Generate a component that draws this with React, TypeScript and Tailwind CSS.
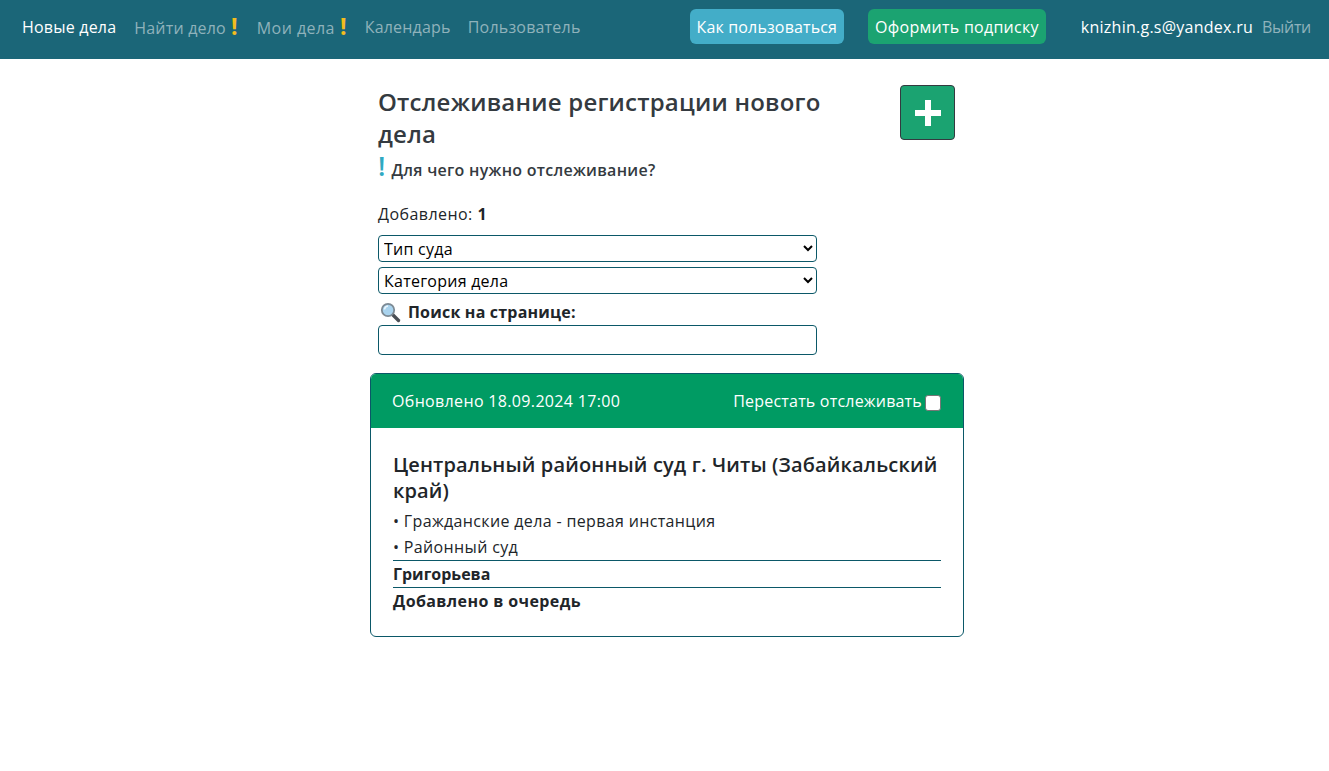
const font = "font-['Open_Sans','Noto_Sans',sans-serif]";

function Bang({ className }: { className: string }) {
  return <span className={`font-bold leading-none ${className}`}>!</span>;
}

function Magnifier() {
  return (
    <svg width="21" height="21" viewBox="0 0 21 21" className="shrink-0">
      <path d="M12.5 12.5 L18.5 18.5" stroke="#4a4f55" strokeWidth="3.4" strokeLinecap="round" />
      <circle cx="8" cy="8" r="6.2" fill="#a9d3ee" stroke="#7d8a94" strokeWidth="1.8" />
      <path d="M4.5 7.5 A4 4 0 0 1 8 4" stroke="#eaf6fd" strokeWidth="1.6" fill="none" />
    </svg>
  );
}

function NavBar() {
  return (
    <nav className="flex h-[59px] items-center bg-[#1b6678] pb-[6px] pl-[22px] pr-[18px] text-[16px] tracking-[0.2px]">
      <a className="text-white">Новые дела</a>
      <a className="ml-[18px] mt-[2px] text-[#8fb2bb]">Найти дело</a>
      <Bang className="ml-[5px] mb-[1px] text-[23px] text-[#f4bd1c]" />
      <a className="ml-[19px] mt-[2px] tracking-[0.45px] text-[#8fb2bb]">Мои дела</a>
      <Bang className="ml-[5px] mb-[1px] text-[23px] text-[#f4bd1c]" />
      <a className="ml-[18px] text-[#8fb2bb]">Календарь</a>
      <a className="ml-[17px] text-[#8fb2bb]">Пользователь</a>
      <a className="ml-auto flex h-[35px] items-center rounded-[6px] bg-[#43adc8] px-[7px] tracking-[0.15px] text-white">Как пользоваться</a>
      <a className="ml-[24px] flex h-[35px] items-center rounded-[6px] bg-[#1ba371] px-[7px] tracking-[0.27px] text-white">Оформить подписку</a>
      <span className="ml-[35px] tracking-[0.25px] text-white">knizhin.g.s@yandex.ru</span>
      <a className="ml-[9px] tracking-[-0.3px] text-[#8fb2bb]">Выйти</a>
    </nav>
  );
}

function Filter({ label }: { label: string }) {
  return (
    <select className="h-[27px] w-[439px] rounded-[4px] border border-[#0b5868] bg-white pl-[1px] text-[16px] leading-none tracking-[0.25px] text-black">
      <option>{label}</option>
    </select>
  );
}

export default function App() {
  return (
    <div className={`min-h-[771px] bg-white text-[#212529] ${font}`}>
      <NavBar />
      <main className="ml-[370px] w-[594px] pt-[26px]">
        <div className="flex pl-[8px] pr-[9px]">
          <div className="w-[480px] pt-[1px]">
            <h2 className="text-[24px] font-semibold leading-[32px] tracking-[0.22px] text-[#343a40]">
              Отслеживание регистрации нового дела
            </h2>
            <div className="mt-[2px] flex items-baseline">
              <Bang className="text-[27px] font-semibold text-[#2fa9c2]" />
              <span className="ml-[6px] text-[16px] font-semibold tracking-[0.27px] text-[#343a40]">Для чего нужно отслеживание?</span>
            </div>
          </div>
          <button className="ml-auto flex size-[55px] items-center justify-center rounded-[4px] border border-[#343a40] bg-[#1ba371]">
            <svg width="28" height="28" viewBox="0 0 28 28">
              <path d="M11 1 H17 V11 H27 V17 H17 V27 H11 V17 H1 V11 H11 Z" fill="#fff" />
            </svg>
          </button>
        </div>

        <div className="pl-[8px]">
          <p className="mt-[20px] text-[16px] leading-[24px] tracking-[0.45px]">
            Добавлено: <b className="font-bold">1</b>
          </p>
          <div className="mt-[9px] flex flex-col gap-[5px]">
            <Filter label="Тип суда" />
            <Filter label="Категория дела" />
          </div>
          <div className="mt-[5px] flex h-[24px] items-center gap-[7px] pl-[2px] pt-[2px] text-[16px] font-bold tracking-[0.2px]">
            <Magnifier />
            <span>Поиск на странице:</span>
          </div>
          <input className="mt-[2px] block h-[30px] w-[439px] rounded-[4px] border border-[#0b5868] outline-none" />
        </div>

        <section className="mt-[18px] overflow-hidden rounded-[6px] border border-[#0b5868]">
          <div className="flex h-[54px] items-center justify-between bg-[#009b63] pl-[21px] pr-[22px] text-[16px] tracking-[0.34px] text-white">
            <span>Обновлено 18.09.2024 17:00</span>
            <label className="flex items-center tracking-[0.2px]">
              Перестать отслеживать
              <input type="checkbox" className="ml-[3px] mt-[3px] size-[16px] appearance-none rounded-[3px] border border-[#767676] bg-white" />
            </label>
          </div>
          <div className="px-[22px] pb-[22px] pt-[24px]">
            <h3 className="text-[20px] font-semibold leading-[26px] tracking-[0.15px]">
              Центральный районный суд г. Читы (Забайкальский край)
            </h3>
            <p className="mt-[4px] text-[16px] leading-[26px] tracking-[0.35px]">• Гражданские дела - первая инстанция</p>
            <p className="text-[16px] leading-[26px] tracking-[0.35px]">• Районный суд</p>
            <div className="border-t border-[#0b5868] text-[16px] font-bold leading-[26px]">Григорьева</div>
            <div className="border-t border-[#0b5868] text-[16px] font-bold leading-[26px] tracking-[0.4px]">Добавлено в очередь</div>
          </div>
        </section>
      </main>
    </div>
  );
}
